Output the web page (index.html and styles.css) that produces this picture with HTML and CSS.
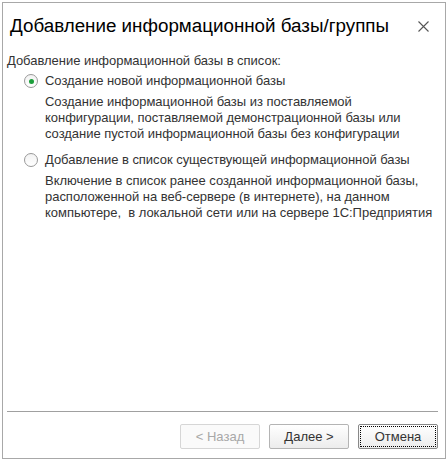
FILE: index.html
```html
<!DOCTYPE html>
<html>
<head>
<meta charset="utf-8">
<link rel="stylesheet" href="styles.css">
</head>
<body>
<div class="frame">
  <div class="titlebar">
    <div class="title">Добавление информационной базы/группы</div>
    <div class="close">
      <svg width="11" height="11" viewBox="0 0 11 11"><path d="M0.5 0.5 L10.5 10.5 M10.5 0.5 L0.5 10.5" stroke="#555" stroke-width="1.1" fill="none"/></svg>
    </div>
  </div>
  <div class="content">
    <div class="heading">Добавление информационной базы в список:</div>
    <div class="option">
      <div class="radio checked"><span class="dot"></span></div>
      <div class="label">Создание новой информационной базы</div>
    </div>
    <div class="desc">Создание информационной базы из поставляемой<br>конфигурации, поставляемой демонстрационной базы или<br>создание пустой информационной базы без конфигурации</div>
    <div class="option">
      <div class="radio"></div>
      <div class="label">Добавление в список существующей информационной базы</div>
    </div>
    <div class="desc">Включение в список ранее созданной информационной базы,<br>расположенной на веб-сервере (в интернете), на данном<br>компьютере,&nbsp; в локальной сети или на сервере 1С:Предприятия</div>
  </div>
  <div class="footer">
    <div class="sep"></div>
    <div class="buttons">
      <div class="btn disabled">&lt; Назад</div>
      <div class="btn">Далее &gt;</div>
      <div class="btn focused"><span class="focus">Отмена</span></div>
    </div>
  </div>
</div>
</body>
</html>
```
FILE: styles.css
```css
html, body {
  margin: 0;
  padding: 0;
  background: #ffffff;
  width: 448px;
  height: 461px;
  overflow: hidden;
}
body {
  font-family: "Liberation Sans", Arial, sans-serif;
  color: #333;
}
.frame {
  box-sizing: border-box;
  margin: 2px 0 0 2px;
  width: 444px;
  height: 457px;
  border: 1px solid #a8a8a8;
  display: flex;
  flex-direction: column;
  background: #fff;
}
.titlebar {
  height: 44px;
  display: flex;
  align-items: center;
  padding: 0 0 0 7px;
}
.title {
  flex: 1;
  font-size: 18.8px;
  color: #000;
  padding-top: 2px;
}
.close {
  width: 11px;
  height: 11px;
  margin-right: 16px;
  margin-top: 2px;
  display: flex;
}
.content {
  flex: 1;
  padding: 6px 0 0 4px;
  font-size: 13px;
  letter-spacing: -0.03px;
}
.heading {
  line-height: 16px;
  margin-bottom: 4px;
}
.option {
  display: flex;
  align-items: center;
  padding-left: 17px;
  height: 16px;
}
.radio {
  box-sizing: border-box;
  width: 14px;
  height: 14px;
  border: 1px solid #999;
  border-radius: 50%;
  background: linear-gradient(#f2f2f2, #ffffff);
  display: flex;
  align-items: center;
  justify-content: center;
  margin-right: 7px;
}
.dot {
  width: 5px;
  height: 5px;
  border-radius: 50%;
  background: #1b9e3a;
}
.label {
  line-height: 16px;
}
.desc {
  padding-left: 38px;
  line-height: 16px;
  margin-top: 5px;
  margin-bottom: 10px;
}
.footer {
  padding: 0 7px 9px 4px;
}
.sep {
  height: 1px;
  background: #a0a0a0;
  margin-bottom: 12px;
}
.buttons {
  display: flex;
  justify-content: flex-end;
  gap: 9px;
}
.btn {
  box-sizing: border-box;
  width: 80px;
  height: 25px;
  border: 1px solid #b4b4b4;
  border-radius: 2px;
  background: linear-gradient(#ffffff, #ececec);
  display: flex;
  align-items: center;
  justify-content: center;
  font-size: 13px;
  color: #333;
}
.btn.disabled {
  color: #a8a8a8;
  border-color: #d6d6d6;
  background: #fafafa;
}
.btn.focused {
  border-color: #888;
  position: relative;
}
.btn.focused::after {
  content: "";
  position: absolute;
  inset: 1px;
  border: 1px dotted #000;
  border-radius: 1px;
}
```
